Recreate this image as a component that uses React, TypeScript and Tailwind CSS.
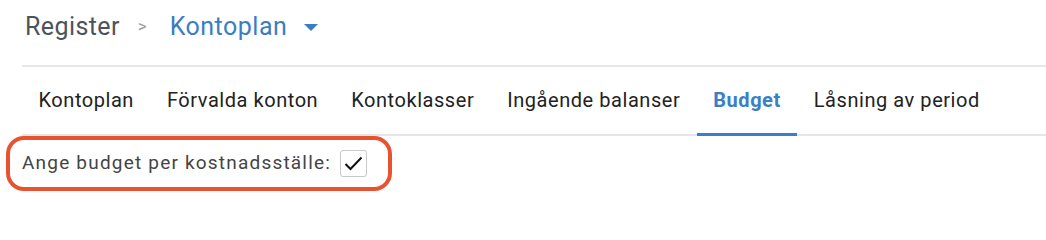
import { useState } from 'react';

const tabs = ['Kontoplan', 'Förvalda konton', 'Kontoklasser', 'Ingående balanser', 'Budget', 'Låsning av period'];

export default function App() {
  const [active, setActive] = useState('Budget');
  const [perCostCenter, setPerCostCenter] = useState(true);

  return (
    <div className="min-h-[218px] w-[1046px] bg-white pl-[22px] font-['Roboto',sans-serif]">
      {/* Breadcrumb */}
      <div className="flex h-[67px] items-center border-b-2 border-[#e6e6e6] pl-[3px] pb-[12px]">
        <span className="text-[25px] tracking-[0.4px] text-[#4c545b]">Register</span>
        <span className="ml-[18px] text-[17px] text-[#9a9a9a]">&gt;</span>
        <button className="ml-[23px] flex items-center text-[25px] tracking-[0.5px] text-[#3b7dc2]">
          Kontoplan
          <svg className="ml-[17px] mt-[1px]" width="14" height="7" viewBox="0 0 14 7">
            <path d="M0 0h14L7 7z" fill="#3b7dc2" />
          </svg>
        </button>
      </div>

      {/* Tabs */}
      <div className="flex h-[69px] items-end border-b-2 border-[#e6e6e6]">
        {tabs.map(t => (
          <button
            key={t}
            onClick={() => setActive(t)}
            className={
              t === active
                ? 'mb-[-2px] border-b-[3px] border-[#3a7fc6] px-[16.5px] pb-[18px] text-[20px] tracking-[0.55px] font-bold text-[#3a7fc6]'
                : 'mb-[-2px] border-b-[3px] border-transparent px-[16.5px] pb-[18px] text-[20px] tracking-[0.55px] text-[#222]'
            }
          >
            {t}
          </button>
        ))}
      </div>

      {/* Checkbox row */}
      <div className="ml-[-16px] inline-flex h-[55px] items-center rounded-[18px] border-[4px] border-[#e8522f] bg-white pl-[12px] pr-[21px]">
        <span className="text-[19px] tracking-[1.2px] text-[#444]">Ange budget per kostnadsställe:</span>
        <button
          onClick={() => setPerCostCenter(v => !v)}
          className="ml-[9px] flex h-[27px] w-[27px] items-center justify-center rounded-[3px] border border-[#c8c8c8] bg-white"
        >
          {perCostCenter && (
            <svg width="19" height="15" viewBox="0 0 19 15">
              <path d="M1.5 8l5 5L17.5 1.5" fill="none" stroke="#111" strokeWidth="2" />
            </svg>
          )}
        </button>
      </div>
    </div>
  );
}
